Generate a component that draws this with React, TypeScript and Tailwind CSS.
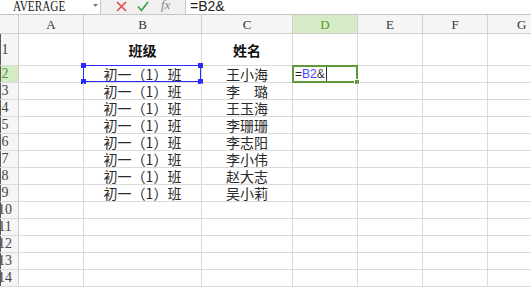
import React from "react";

const serif = { fontFamily: '"Liberation Serif", "Noto Sans CJK SC", serif' };
const cjk = { fontFamily: '"Noto Sans CJK SC", "Liberation Sans", sans-serif' };

const names = ["王小海", "李　璐", "王玉海", "李珊珊", "李志阳", "李小伟", "赵大志", "吴小莉"];

function RowHead({ n, active }: { n: number; active?: boolean }) {
  return (
    <div
      className={`w-[19px] shrink-0 border-r border-l border-r-[#d0d0d0] border-l-[#5a5a5a] overflow-hidden flex items-center ${
        active ? "bg-[#d5ebc6] text-[#4e9a2c]" : "bg-[#f5f5f5] text-[#444]"
      }`}
    >
      <div className="w-[20px] -ml-[6px] text-center text-[14px] leading-none" style={serif}>
        {n}
      </div>
    </div>
  );
}

function Cell({ w, children, className = "" }: { w: string; children?: React.ReactNode; className?: string }) {
  return (
    <div className={`${w} shrink-0 border-r border-[#dadada] flex items-center justify-center relative ${className}`}>
      {children}
    </div>
  );
}

export default function App() {
  const rows = [];
  for (let r = 1; r <= 14; r++) {
    const isTitle = r === 1;
    const dataIdx = r - 2;
    const hasData = dataIdx >= 0 && dataIdx < 8;
    rows.push(
      <div
        key={r}
        className={`flex border-b border-[#dadada] ${isTitle ? "h-[32px]" : "h-[17px]"}`}
      >
        <RowHead n={r} active={r === 2} />
        <Cell w="w-[65px]" />
        <Cell w="w-[118px]">
          {isTitle && (
            <span className="text-[14px] font-bold text-[#111] leading-none" style={cjk}>
              班级
            </span>
          )}
          {hasData && (
            <span className="text-[14px] text-[#2a2a2a] leading-none" style={cjk}>
              初一（1）班
            </span>
          )}
          {r === 2 && (
            <div className="absolute -left-[1px] -top-[1px] right-0 bottom-0 border border-[#2a2aff] pointer-events-none">
              <div className="absolute -left-[3px] -top-[3px] w-[5px] h-[5px] bg-[#2a2aff]" />
              <div className="absolute -right-[3px] -top-[3px] w-[5px] h-[5px] bg-[#2a2aff]" />
              <div className="absolute -left-[3px] -bottom-[3px] w-[5px] h-[5px] bg-[#2a2aff]" />
              <div className="absolute -right-[3px] -bottom-[3px] w-[5px] h-[5px] bg-[#2a2aff]" />
            </div>
          )}
        </Cell>
        <Cell w="w-[91px]">
          {isTitle && (
            <span className="text-[14px] font-bold text-[#111] leading-none" style={cjk}>
              姓名
            </span>
          )}
          {hasData && (
            <span className="text-[14px] text-[#2a2a2a] leading-none" style={cjk}>
              {names[dataIdx]}
            </span>
          )}
        </Cell>
        <Cell w="w-[65px]" className="!justify-start">
          {r === 2 && (
            <>
              <span className="ml-[2px] text-[12px] leading-none" style={{ fontFamily: '"Liberation Sans", sans-serif' }}>
                <span className="text-[#222]">=</span>
                <span className="text-[#4444ff]">B2</span>
                <span className="text-[#333]">&amp;</span>
              </span>
              <span className="ml-[1px] w-px h-[14px] bg-[#333]" />
              <div className="absolute -left-[1px] -top-[1px] -right-[1px] -bottom-[1px] border-2 border-[#5c9a3a] pointer-events-none">
                <div className="absolute -right-[3px] -bottom-[3px] w-[4px] h-[4px] bg-[#5c9a3a] outline outline-1 outline-white" />
              </div>
            </>
          )}
        </Cell>
        <Cell w="w-[65px]" />
        <Cell w="w-[65px]" />
        <div className="flex-1" />
      </div>
    );
  }

  const colHeads = [
    { l: "A", w: "w-[65px]" },
    { l: "B", w: "w-[118px]" },
    { l: "C", w: "w-[91px]" },
    { l: "D", w: "w-[65px]", active: true },
    { l: "E", w: "w-[65px]" },
    { l: "F", w: "w-[65px]" },
  ];

  return (
    <div className="w-[531px] h-[287px] overflow-hidden bg-white relative">
      {/* formula bar */}
      <div className="h-[15px] flex bg-[#f0f0f0] border-b border-[#c4c4c4]">
        <div className="w-[101px] shrink-0 bg-white border-r border-[#c8c8c8] relative overflow-hidden">
          <span
            className="absolute left-[13px] -top-[1px] text-[15px] leading-none text-[#222] scale-x-75 origin-left inline-block whitespace-nowrap"
            style={serif}
          >
            AVERAGE
          </span>
          <svg className="absolute left-[93px] top-[4px]" width="5" height="4" viewBox="0 0 5 4">
            <path d="M0 0 H5 L2.5 3 Z" fill="#777" />
          </svg>
        </div>
        <div className="w-[84px] shrink-0 flex items-center relative">
          <svg className="absolute left-[15px] top-[1px]" width="11" height="11" viewBox="0 0 11 11">
            <path d="M1 1 L10 10 M10 1 L1 10" stroke="#e24a4a" strokeWidth="1.6" />
          </svg>
          <svg className="absolute left-[36px] top-[1px]" width="12" height="11" viewBox="0 0 12 11">
            <path d="M1 5.5 L4.5 9.5 L11 1" stroke="#3f9e3f" strokeWidth="1.7" fill="none" />
          </svg>
          <span
            className="absolute left-[60px] -top-[2px] text-[13px] italic text-[#888] leading-none"
            style={serif}
          >
            fx
          </span>
        </div>
        <div className="flex-1 bg-white border-l border-[#c8c8c8] relative">
          <span
            className="absolute left-[4px] -top-[1px] text-[14px] leading-none text-[#222]"
            style={{ fontFamily: '"Liberation Sans", sans-serif' }}
          >
            =B2&amp;
          </span>
        </div>
      </div>
      {/* column header */}
      <div className="h-[19px] flex bg-[#f5f5f5] border-b border-[#d0d0d0]">
        <div className="w-[19px] shrink-0 border-r border-[#d0d0d0]" />
        {colHeads.map((c) => (
          <div
            key={c.l}
            className={`${c.w} shrink-0 border-r border-[#d0d0d0] flex items-center justify-center text-[13px] leading-none ${
              c.active ? "bg-[#d5ebc6] text-[#4e9a2c]" : "text-[#333]"
            }`}
            style={serif}
          >
            {c.l}
          </div>
        ))}
        <div className="flex-1 flex items-center text-[13px] leading-none text-[#333]" style={serif}>
          <span className="ml-[29px]">G</span>
        </div>
      </div>
      {rows}
    </div>
  );
}
